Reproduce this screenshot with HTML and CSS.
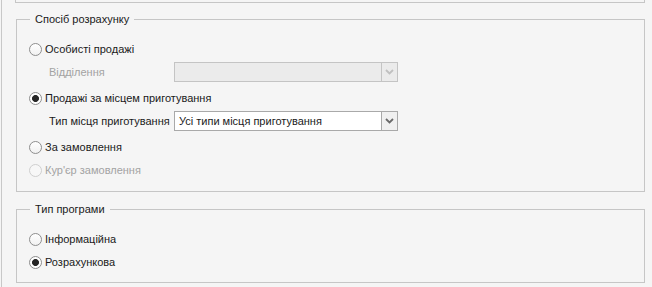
FILE: index.html
```html
<!DOCTYPE html>
<html lang="uk">
<head>
  <meta charset="UTF-8">
  <meta name="viewport" content="width=device-width, initial-scale=1.0">
  <title>Налаштування розрахунку</title>
  <link rel="stylesheet" href="styles.css">
</head>
<body>
  <div class="frame">
    <div class="top-box"></div>

    <fieldset class="group group-calc">
      <legend>Спосіб розрахунку</legend>
      <div class="rows">
        <label class="radio-row"><span class="radio"></span>Особисті продажі</label>
        <div class="field-row is-disabled">
          <span class="field-label">Відділення</span>
          <div class="combo combo-disabled">
            <span class="combo-value"></span>
            <span class="combo-btn">
              <svg width="9" height="6" viewBox="0 0 9 6"><path d="M1 1 L4.5 4.5 L8 1" fill="none" stroke="currentColor" stroke-width="1.8"/></svg>
            </span>
          </div>
        </div>
        <label class="radio-row"><span class="radio is-checked"></span>Продажі за місцем приготування</label>
        <div class="field-row">
          <span class="field-label">Тип місця приготування</span>
          <div class="combo">
            <span class="combo-value">Усі типи місця приготування</span>
            <span class="combo-btn">
              <svg width="9" height="6" viewBox="0 0 9 6"><path d="M1 1 L4.5 4.5 L8 1" fill="none" stroke="currentColor" stroke-width="1.8"/></svg>
            </span>
          </div>
        </div>
        <label class="radio-row"><span class="radio"></span>За замовлення</label>
        <label class="radio-row is-disabled"><span class="radio"></span>Кур'єр замовлення</label>
      </div>
    </fieldset>

    <fieldset class="group group-type">
      <legend>Тип програми</legend>
      <div class="rows">
        <label class="radio-row"><span class="radio"></span>Інформаційна</label>
        <label class="radio-row"><span class="radio is-checked"></span>Розрахункова</label>
      </div>
    </fieldset>
  </div>
</body>
</html>
```

FILE: styles.css
```css
html,
body {
    margin: 0;
    padding: 0;
}

body {
    background: #f5f5f5;
    color: #1a1a1a;
    font-family: "Liberation Sans", Arial, sans-serif;
    font-size: 11px;
}

.frame {
    margin-left: 1px;
    border-left: 1px solid #c8c8c8;
    height: 287px;
    padding: 0 7px 0 13px;
    box-sizing: border-box;
}

.top-box {
    height: 2px;
    border: 1px solid #c6c6c6;
    border-top: 0;
}

.group {
    margin: 9px 0 0 1px;
    padding: 0;
    border: 1px solid #c6c6c6;
    min-width: 0;
}

.group legend {
    margin-left: 13px;
    padding: 0 5px;
    line-height: 14px;
}

.group-type {
    margin-top: 10px;
}

.rows {
    display: flex;
    flex-direction: column;
    padding: 13px 0 11px 12px;
}

.group-type .rows {
    padding-bottom: 10px;
}

/* radio rows */
.radio-row {
    display: flex;
    align-items: center;
    height: 20px;
}

.radio-row + .radio-row {
    margin-top: 3px;
}

.field-row + .radio-row {
    margin-top: 6px;
}

.radio {
    width: 13px;
    height: 13px;
    margin-right: 3px;
    border: 1px solid #8e8e8e;
    border-radius: 50%;
    box-sizing: border-box;
    background: linear-gradient(#ffffff, #f1f1f1);
}

.radio.is-checked {
    background: radial-gradient(circle, #262626 0 3.1px, #ffffff 3.8px);
}

.radio-row.is-disabled {
    color: #a3a3a3;
}

.radio-row.is-disabled .radio {
    border-color: #cfcfcf;
    background: #f7f7f7;
}

/* combo rows */
.field-row {
    display: flex;
    align-items: center;
    height: 20px;
    margin-top: 3px;
    padding-left: 20px;
}

.field-label {
    width: 125px;
}

.field-row.is-disabled .field-label {
    color: #a3a3a3;
}

.combo {
    display: flex;
    width: 224px;
    height: 20px;
    border: 1px solid #a9a9a9;
    box-sizing: border-box;
    background: #ffffff;
}

.combo-value {
    flex: 1;
    padding-left: 4px;
    line-height: 18px;
    white-space: nowrap;
}

.combo-btn {
    display: flex;
    align-items: center;
    justify-content: center;
    width: 15px;
    border-left: 1px solid #a9a9a9;
    background: #f0f0f0;
    color: #6a6a6a;
}

.combo-disabled {
    border-color: #c4c4c4;
    background: #ebebeb;
}

.combo-disabled .combo-btn {
    border-color: #c4c4c4;
    background: #ebebeb;
    color: #c0c0c0;
}
```
